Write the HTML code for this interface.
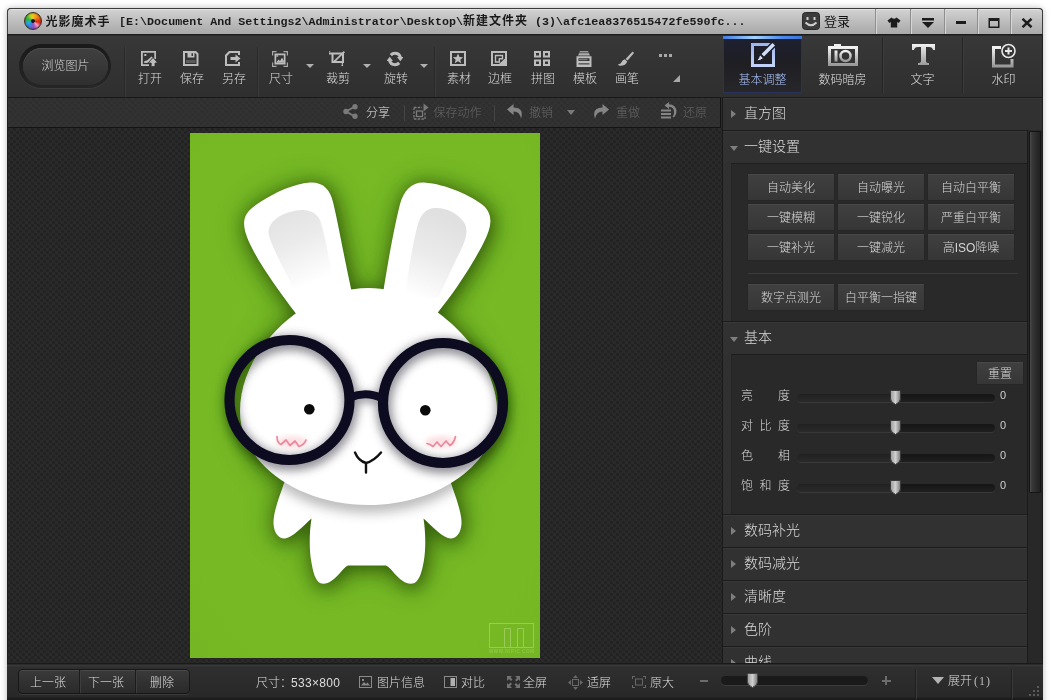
<!DOCTYPE html>
<html lang="zh-CN">
<head>
<meta charset="utf-8">
<title>光影魔术手</title>
<style>
*{box-sizing:border-box;margin:0;padding:0}
html,body{width:1050px;height:700px;overflow:hidden;background:#fff}
body{position:relative;font-family:"Liberation Sans","Noto Sans CJK SC",sans-serif;font-size:12px;font-weight:300;color:#c8c8c8}
.abs{position:absolute}
#shadow{position:absolute;left:7px;top:8px;width:1036px;height:700px;border-radius:5px 5px 0 0;box-shadow:0 0 6px rgba(0,0,0,.28)}
#win{will-change:transform;position:absolute;left:7px;top:8px;width:1036px;height:692px;background:#2d2d2d;border-radius:4px 4px 0 0;overflow:hidden}
#win>*{position:absolute}
/* coordinates inside #win are page coords minus (7,8) */
#title{left:0;top:0;width:1036px;height:26px;background:linear-gradient(#d3d3d3,#c1c1c1 40%,#a8a8a8);border:1px solid #3e3e3e;border-bottom:0;border-radius:4px 4px 0 0;box-shadow:inset 0 1px 0 #e2e2e2}
#title .t{position:absolute;color:#1a1a1a;font-weight:700;white-space:nowrap}
#toolbar{left:0;top:26px;width:1036px;height:63px;background:linear-gradient(#1c1c1c 0,#1c1c1c 1px,#383838 2px,#333 50%,#2f2f2f 100%)}
.pat{background-color:#2a2a2a;background-image:radial-gradient(circle at 1.5px 1.5px,#222 0,#222 1px,rgba(34,34,34,0) 2px),radial-gradient(circle at 4.5px 4.5px,#222 0,#222 1px,rgba(34,34,34,0) 2px);background-size:6px 6px}
#sub{left:0;top:89px;width:714px;height:31px}
#canvas{left:0;top:120px;width:715px;height:536px}
#panel{left:715px;top:89px;width:321px;height:567px;background:#2b2b2b}
#status{left:0;top:655px;width:1036px;height:37px;background:linear-gradient(#1a1a1a 0,#1a1a1a 1px,#3a3a3a 2px,#2f2f2f 4px,#282828 34px,#1c1c1c 35px)}

#title .sep{position:absolute;top:0;width:2px;height:25px;background:linear-gradient(90deg,#8e8e8e 50%,#d6d6d6 50%)}
#appicon{position:absolute;left:16px;top:3px;width:18px;height:18px;border-radius:50%;background:conic-gradient(from 0deg,#f7c51c 0,#f08a1a 45deg,#e3231b 100deg,#f3a0c0 135deg,#a04cc8 170deg,#3a7fe0 215deg,#2aa8e8 250deg,#2fb53a 290deg,#b4d82a 335deg,#f7c51c 360deg);border:1px solid #3a3018;box-shadow:inset 0 0 2px rgba(0,0,0,.6)}
#appicon:after{content:"";position:absolute;left:6px;top:6px;width:4px;height:4px;border-radius:50%;background:#151515}
.tb{position:absolute;top:0;height:63px;text-align:center;color:#dadada;white-space:nowrap}
.tb svg{position:absolute;left:50%;top:17px;margin-left:-8px;width:16px;height:16px}
.tb span{position:absolute;left:-19px;right:-21px;top:37px;line-height:16px;font-size:12px}
.vsep{position:absolute;top:13px;width:2px;height:50px;background:linear-gradient(90deg,#292929 50%,#3b3b3b 50%)}
.dd{position:absolute;top:30px;width:0;height:0;border:4px solid transparent;border-top:4px solid #b0b0b0;border-bottom:0}

#sub{background-color:#323232;background-image:radial-gradient(circle at 1.5px 1.5px,#2e2e2e 0,#2e2e2e 1px,rgba(46,46,46,0) 2px),radial-gradient(circle at 4.5px 4.5px,#2e2e2e 0,#2e2e2e 1px,rgba(46,46,46,0) 2px);background-size:6px 6px;border:1px solid #131313;border-left-color:#2a2a2a;border-top-color:#181818}
#sub .tx{position:absolute;top:7px;line-height:16px;font-size:12px;color:#666;white-space:nowrap}
#sub svg{position:absolute}
#sub .sp{position:absolute;top:7px;width:1px;height:16px;background:#454545}
#status .tx{position:absolute;top:11.5px;line-height:16px;font-size:12px;color:#dedede;white-space:nowrap}
#status svg{position:absolute}

#panel{background:#303030;border-left:1px solid #1a1a1a}
#panel>*{position:absolute}
.hd{left:0;width:304px;height:33px;background:#313131;border-top:1px solid #1c1c1c;box-shadow:inset 0 1px 0 #383838;font-size:14px;color:#dcdcdc;line-height:31px;padding-left:21px;white-space:nowrap}
.hd i{position:absolute;left:8px;top:12px;width:0;height:0;border:4px solid transparent;border-left:5px solid #7e7e7e;border-right:0}
.hd i.dn{left:7px;top:15px;border:4px solid transparent;border-top:5px solid #7e7e7e;border-bottom:0}
.ct{left:8px;width:296px;background:#292929;border-top:1px solid #1e1e1e;border-left:1px solid #242424}
.ct>*{position:absolute}
.bt{width:86px;height:26px;background:linear-gradient(#404040,#363636);box-shadow:inset 0 1px 0 #484848,0 0 0 1px #262626;text-align:center;line-height:29px;font-size:12px;color:#d6d6d6;white-space:nowrap}
.lb{left:9px;width:50px;font-size:12px;line-height:16px;color:#dadada;white-space:nowrap}
.tr{left:65px;width:198px;height:8px;border-radius:4px;background:linear-gradient(90deg,rgba(255,255,255,.05) 49%,rgba(255,255,255,0) 51%),linear-gradient(#151515,#1f1f1f);box-shadow:0 1px 0 #393939}
.th{left:158px;width:11px;height:15px}
.zv{left:268px;font-size:11px;line-height:12px;color:#cfcfcf}
.tab{position:absolute;top:2px;height:57px;text-align:center}
.tab span{position:absolute;left:0;right:0;top:36px;font-size:12px;line-height:16px;color:#e0e0e0}
.tab svg{position:absolute}
</style>
</head>
<body>
<div id="shadow"></div>
<div id="win">
 <div id="title">
  <div id="appicon"></div>
  <div class="t" style="left:37.5px;top:5px;font-size:12px;letter-spacing:1px;line-height:16px">光影魔术手</div>
  <div class="t" style="left:111px;top:5px;line-height:16px;font-family:'Liberation Mono','Noto Sans CJK SC',monospace;font-size:11.67px;letter-spacing:.025px"><span>[E:\Document And Settings2\Administrator\Desktop\</span><span style="letter-spacing:1px;font-size:12px">新建文件夹</span><span> (3)\afc1ea8376515472fe590fc...</span></div>
  <svg class="abs" style="left:794px;top:3px" width="18" height="18" viewBox="0 0 18 18"><rect x=".5" y=".5" width="17" height="17" rx="3" fill="#3c3c3c" stroke="#2a2a2a"/><rect x="4.5" y="5" width="2" height="3" fill="#cfcfcf"/><rect x="11.5" y="5" width="2" height="3" fill="#cfcfcf"/><path d="M3.5 10.5 Q9 16 14.500 10.500" fill="none" stroke="#cfcfcf" stroke-width="1.8"/></svg>
  <div class="t" style="left:816px;top:5px;font-size:13px;line-height:16px;font-weight:400;color:#111">登录</div>
  <div class="sep" style="left:867px"></div><div class="sep" style="left:902px"></div><div class="sep" style="left:936px"></div><div class="sep" style="left:969px"></div><div class="sep" style="left:1002px"></div>
  <svg class="abs" style="left:879px;top:8px" width="14" height="11" viewBox="0 0 14 11"><path d="M4.500 .5 L.5 3.500 L2.300 6 L3.800 5 L3.800 10.500 L10.200 10.500 L10.200 5 L11.700 6 L13.500 3.500 L9.500 .5 Q7 3 4.500 .5Z" fill="#1c1c1c"/></svg>
  <svg class="abs" style="left:914px;top:9px" width="12" height="10" viewBox="0 0 12 10"><rect x="0" y="0" width="12" height="2.500" fill="#1c1c1c"/><path d="M0 4 L12 4 L6 10Z" fill="#1c1c1c"/></svg>
  <div class="abs" style="left:948px;top:12px;width:10px;height:3px;background:#1c1c1c"></div>
  <svg class="abs" style="left:980px;top:9px" width="12" height="10" viewBox="0 0 12 10"><path d="M.5 0H11.500V10H.5Z M2 3V8.500H10V3Z" fill="#1c1c1c" fill-rule="evenodd"/></svg>
  <svg class="abs" style="left:1013px;top:9px" width="12" height="10" viewBox="0 0 12 10"><path d="M1.500 .8 L10.500 9.200 M10.500 .8 L1.500 9.200" stroke="#1c1c1c" stroke-width="2.500"/></svg>
 </div>
 <div id="toolbar">
<div class="abs" style="left:12px;top:10px;width:92px;height:44px;border-radius:22px;background:linear-gradient(#191919,#262626);box-shadow:0 1px 0 #3c3c3c"></div><div class="abs" style="left:16px;top:14px;width:85px;height:37px;border-radius:19px;background:linear-gradient(#404040,#2f2f2f);box-shadow:inset 0 1px 0 #4e4e4e;text-align:center;line-height:37px;color:#d4d4d4;font-size:12px">浏览图片</div>
<div class="vsep" style="left:117px"></div><div class="vsep" style="left:250px"></div><div class="vsep" style="left:427px"></div>
<div class="tb" style="left:134px;width:16px"><svg viewBox="0 0 16 16" fill="#bdbdbd"><path d="M0 0H15V8H13.300V1.800H1.800V13.200H8V15H0Z"/><rect x="3.300" y="3" width="2" height="2"/><path d="M2.800 11.800 L3.500 10 L6 9.500 L10.500 5.500 L11.800 6.500 L8 11 L6 12Z"/><path d="M12 6.500 L16.800 12 H14 V15.500 H10.200 V12 H7.200Z" stroke="#333" stroke-width=".8"/></svg><span>打开</span></div>
<div class="tb" style="left:176px;width:16px"><svg viewBox="0 0 16 16" fill="#bdbdbd"><path d="M0 0H13L15.500 2.500V15H0Z M2 2V13H13.500V3.500L12 2Z" fill-rule="evenodd"/><path d="M4.500 1H11.500V6.500H4.500Z M8.500 2.200V5H10V2.200Z" fill-rule="evenodd"/><rect x="3" y="9" width="9.500" height="3" opacity=".3"/></svg><span>保存</span></div>
<div class="tb" style="left:218px;width:16px"><svg viewBox="0 0 16 16" fill="#bdbdbd"><path d="M4 0H15V4H13V2H5L2 5V13H13V11H15V15H0V4Z"/><path d="M5.500 6H10.500V3.500L15.500 7.500L10.500 11.500V9H5.500Z"/></svg><span>另存</span></div>
<div class="tb" style="left:265px;width:16px"><svg viewBox="0 0 16 16" fill="#bdbdbd"><path d="M0 0H4.500V1.200H1.200V4.500H0Z M16 0V4.500H14.800V1.200H11.500V0Z M0 16V11.500H1.200V14.800H4.500V16Z M16 16H11.500V14.800H14.800V11.500H16Z" opacity=".85"/><path d="M2.500 2.500H13.500V13.500H2.500Z M4.200 4.200V11.800H11.800V4.200Z" fill-rule="evenodd"/><path d="M4.200 11.800 L6.500 8.500 L8 10 L10 6.800 L11.800 9.500V11.800Z"/><rect x="4.200" y="4.200" width="2" height="1.600" opacity=".8"/></svg><span>尺寸</span></div>
<div class="tb" style="left:322px;width:16px"><svg viewBox="0 0 16 16" fill="#bdbdbd"><path d="M2.500 1.500H15V3.500H4.500V10H13V3.500H15V12H2.500Z M0 1.500H2.500V3.500H0Z" fill-rule="evenodd"/><path d="M14.800 0 L16 1.200 L5 12 L3.800 10.800Z"/><rect x="0" y="0" width="1.300" height="1.300" opacity=".7"/><rect x="12.500" y="13.500" width="1.600" height="1.600"/><rect x="12.800" y="12" width="1.200" height="1.500"/></svg><span>裁剪</span></div>
<div class="tb" style="left:380px;width:16px"><svg viewBox="0 0 16 16" fill="#bdbdbd"><path d="M8 0.800 A7.200 7.200 0 0 1 14.900 6 L16.500 6 L13.300 10.300 L10 6 L11.700 6 A4.200 4.200 0 0 0 8 3.800 A4.300 4.300 0 0 0 4.900 5.200 L2.700 3.100 A7.200 7.200 0 0 1 8 0.800Z"/><path d="M8 15.200 A7.200 7.200 0 0 1 1.100 10 L-0.500 10 L2.700 5.700 L6 10 L4.300 10 A4.200 4.200 0 0 0 8 12.200 A4.300 4.300 0 0 0 11.100 10.800 L13.300 12.900 A7.200 7.200 0 0 1 8 15.200Z"/></svg><span>旋转</span></div>
<div class="tb" style="left:443px;width:16px"><svg viewBox="0 0 16 16" fill="#bdbdbd"><path d="M0 0H16V15H0Z M2 2V13H14V2Z" fill-rule="evenodd"/><path d="M8 2.600 L9.500 6 L13.200 6.300 L10.300 8.700 L11.300 12.300 L8 10.300 L4.700 12.300 L5.700 8.700 L2.800 6.300 L6.500 6Z"/></svg><span>素材</span></div>
<div class="tb" style="left:484px;width:16px"><svg viewBox="0 0 16 16" fill="#bdbdbd"><path d="M0 0H16V15H0Z M2 2V13H14V2Z" fill-rule="evenodd"/><path d="M3.800 3.800H12.200V8.500H9V11.700H3.800Z M5.200 5.200V10.300H7.600V7.100H10.800V5.200Z" fill-rule="evenodd"/><path d="M14 7.500V13H8Z"/></svg><span>边框</span></div>
<div class="tb" style="left:527px;width:16px"><svg viewBox="0 0 16 16" fill="#bdbdbd"><path d="M0 0H7V6.500H0Z M2 2V4.500H5V2Z M9 0H16V6.500H9Z M11 2V4.500H14V2Z M0 8.500H7V15H0Z M2 10.500V13H5V10.500Z M9 8.500H16V15H9Z M11 10.500V13H14V10.500Z" fill-rule="evenodd"/></svg><span>拼图</span></div>
<div class="tb" style="left:569px;width:16px"><svg viewBox="0 0 16 16" fill="#bdbdbd"><path d="M4 0H12L12.800 1.600H3.200Z" opacity=".75"/><path d="M3 2.300H13L14 4.600H2Z" opacity=".9"/><path d="M0.500 5.300H15.500V16H0.500Z M2.500 7.300V10H13.500V7.300Z" fill-rule="evenodd"/><rect x="3" y="8" width="8.500" height="1.200" opacity=".5"/><rect x="2.500" y="12.200" width="11" height="1.300" fill="#4a4a4a"/></svg><span>模板</span></div>
<div class="tb" style="left:611px;width:16px"><svg viewBox="0 0 16 16" fill="#bdbdbd"><path d="M14.600 0.500 L16 1.900 L9.600 9.600 L7.600 7.900Z"/><path d="M6.800 8.300 L9.200 10.600 Q8 15 1.500 14.800 Q0.300 14.600 0 13.500 Q3.200 12.800 3.800 10.800 Q4.500 8.800 6.800 8.300Z"/></svg><span>画笔</span></div>
<div class="dd" style="left:299px"></div><div class="dd" style="left:356px"></div><div class="dd" style="left:413px"></div><div class="tab" style="left:716px;width:79px;background:linear-gradient(#1d2033,#1e1e23 45%,#27272a);border:1px solid #28325e;border-top:0"><div class="abs" style="left:-1px;right:-1px;top:0;height:3px;background:linear-gradient(90deg,#3f7ce4,#a4d4ff 40%,#4a88ea 75%,#3a74dc)"></div>
<svg style="left:26px;top:6px" width="26" height="25" viewBox="0 0 26 25"><defs><linearGradient id="bl" x1="0" y1="0" x2="0" y2="1"><stop offset="0" stop-color="#9db6ee"/><stop offset="1" stop-color="#c2d2fa"/></linearGradient></defs><rect x="2.500" y="2.500" width="21" height="21" fill="none" stroke="url(#bl)" stroke-width="3"/><path d="M22.500 0 L26 3.500 L14 15.500 L10.500 12Z" fill="#cfdcfb" stroke="#1c1c24" stroke-width="1.400"/><path d="M9.800 12.500 L13.500 16.200 Q10 19.500 6.500 18.800 Q9 16.500 9.800 12.500Z" fill="#cfdcfb" stroke="#1c1c24" stroke-width="1"/></svg>
<span style="color:#aac2fa">基本调整</span></div>
<div class="abs" style="left:875px;top:3px;width:2px;height:56px;background:linear-gradient(90deg,#252525 50%,#3b3b3b 50%)"></div>
<div class="abs" style="left:955px;top:3px;width:2px;height:56px;background:linear-gradient(90deg,#252525 50%,#3b3b3b 50%)"></div>
<div class="tab" style="left:796px;width:79px"><svg style="left:25px;top:6px" width="30" height="24" viewBox="0 0 30 24"><defs><linearGradient id="ig" x1="0" y1="0" x2="0" y2="1"><stop offset="0" stop-color="#f2f2f2"/><stop offset="1" stop-color="#9a9a9a"/></linearGradient></defs><path d="M1.500 5.500H28.500V22.500H1.500Z" fill="none" stroke="url(#ig)" stroke-width="3"/><rect x="6" y="2" width="7" height="3" fill="#eee"/><rect x="6.500" y="8.500" width="3" height="11" fill="url(#ig)"/><circle cx="17.500" cy="14" r="5" fill="none" stroke="url(#ig)" stroke-width="2.500"/></svg><span>数码暗房</span></div>
<div class="tab" style="left:876px;width:79px"><svg style="left:29px;top:8px" width="23" height="22" viewBox="0 0 23 22"><path d="M0 0H23V6H21Q20.500 3 17 3H14V17Q14 19 17 19V21H6V19Q9 19 9 17V3H6Q2.500 3 2 6H0Z" fill="url(#ig)"/></svg><span>文字</span></div>
<div class="tab" style="left:957px;width:79px"><svg style="left:28px;top:7px" width="25" height="25" viewBox="0 0 25 25"><path d="M9 4.500H1.500V23H20V16" fill="none" stroke="url(#ig)" stroke-width="3"/><circle cx="16.500" cy="8" r="6.500" fill="none" stroke="#e8e8e8" stroke-width="1.600"/><path d="M16.500 4.500V11.500M13 8H20" stroke="#e8e8e8" stroke-width="2"/></svg><span>水印</span></div>
<div class="abs" style="left:652px;top:20px;width:3px;height:3px;background:#a8a8a8;box-shadow:5px 0 0 #a8a8a8,10px 0 0 #a8a8a8"></div><div class="abs" style="left:666px;top:41px;width:0;height:0;border-left:7px solid transparent;border-bottom:7px solid #a8a8a8"></div>
</div>
 <div id="sub" class="pat">
 <svg style="left:335px;top:6px" width="15" height="15" viewBox="0 0 15 15"><path d="M12 2.500 L3 7.500 L12 12.500" fill="none" stroke="#7a7a7a" stroke-width="2"/><circle cx="12" cy="2.700" r="2.700" fill="#7a7a7a"/><circle cx="3" cy="7.500" r="2.700" fill="#7a7a7a"/><circle cx="12" cy="12.300" r="2.700" fill="#7a7a7a"/></svg>
 <div class="tx" style="left:358px;color:#e2e2e2">分享</div>
 <div class="sp" style="left:396px"></div>
 <svg style="left:405px;top:5px" width="16" height="17" viewBox="0 0 16 17"><path d="M1 4.500H9 M1 4.500V16 M1 16H12 M12 16V9" fill="none" stroke="#7a7a7a" stroke-width="1.300" stroke-dasharray="2.500 1.200"/><rect x="3.500" y="8" width="6" height="5.500" fill="none" stroke="#7a7a7a" stroke-width="1.300"/><path d="M10.500 0.500 L15.500 4.500 L10.500 8.500Z" fill="#7a7a7a"/></svg>
 <div class="tx" style="left:425.5px">保存动作</div>
 <div class="sp" style="left:486px"></div>
 <svg style="left:499px;top:6px" width="16" height="15" viewBox="0 0 16 15"><path d="M6.500 0 L0 5.500 L6.500 11 V7.500 Q12.500 7.500 14 14.500 Q17.500 4 6.500 3.500Z" fill="#858585"/></svg>
 <div class="tx" style="left:521px">撤销</div>
 <div class="abs" style="left:559px;top:12px;width:0;height:0;border:4px solid transparent;border-top:5px solid #7a7a7a;border-bottom:0"></div>
 <svg style="left:585px;top:6px" width="16" height="15" viewBox="0 0 16 15"><path d="M9.500 0 L16 5.500 L9.500 11 V7.500 Q3.500 7.500 2 14.500 Q-1.500 4 9.500 3.500Z" fill="#858585"/></svg>
 <div class="tx" style="left:608px">重做</div>
 <svg style="left:653px;top:4px" width="17" height="17" viewBox="0 0 17 17"><path d="M8 0 L3.500 3.500 L8 7 V4.800 Q13.500 5 13 11 Q12.800 13 11.500 14.500 L13 15.500 Q16 12 15.500 8.500 Q14.500 2.500 8 2.200Z" fill="#858585"/><rect x="0" y="7.500" width="10" height="2" fill="#858585"/><rect x="0" y="11" width="10" height="2" fill="#858585"/><rect x="0" y="14.500" width="10" height="2" fill="#858585"/></svg>
 <div class="tx" style="left:675px">还原</div>
</div>
 <div id="canvas" class="pat">
<svg class="abs" style="left:183px;top:5px" width="350" height="525" viewBox="190 133 350 525">
<defs>
 <radialGradient id="bg" cx="50%" cy="45%" r="75%"><stop offset="0" stop-color="#77ba25"/><stop offset=".8" stop-color="#76b924"/><stop offset="1" stop-color="#74b623"/></radialGradient>
 <filter id="sh" x="-20%" y="-20%" width="140%" height="140%"><feGaussianBlur stdDeviation="8"/></filter>
 <filter id="sh2" x="-20%" y="-20%" width="140%" height="140%"><feGaussianBlur stdDeviation="4"/></filter>
 <filter id="sh3" x="-20%" y="-20%" width="140%" height="140%"><feGaussianBlur stdDeviation="2.500"/></filter>
 <filter id="sh5" x="-20%" y="-20%" width="140%" height="140%"><feGaussianBlur stdDeviation="5"/></filter>
 <filter id="sh6" x="-30%" y="-30%" width="160%" height="160%"><feGaussianBlur stdDeviation="16"/></filter>
 <filter id="sh4" x="-20%" y="-20%" width="140%" height="140%"><feGaussianBlur stdDeviation="6"/></filter>
 <linearGradient id="earL" x1="0" y1="0" x2=".35" y2="1"><stop offset="0" stop-color="#e0e0e0"/><stop offset=".45" stop-color="#ebebeb"/><stop offset=".95" stop-color="#fff"/></linearGradient>
 <linearGradient id="earR" x1=".3" y1="0" x2="0" y2="1"><stop offset="0" stop-color="#e0e0e0"/><stop offset=".45" stop-color="#ebebeb"/><stop offset=".95" stop-color="#fff"/></linearGradient>
 <clipPath id="imgclip"><rect x="190" y="133" width="350" height="525"/></clipPath>
 <path id="headp" d="M240.0 411 C240.0 349.5 304.2 288 368.5 288 C432.8 288 497.0 355.6 497.0 411 C497.0 462.9 439.5 505 368.5 505 C297.5 505 240.0 462.9 240.0 411Z"/>
 <path id="earLp" d="M303 323 L294 311 C280 292 262 268 252 248 C243 230 240 218 252 208 C266 197 290 184 310 182.500 C324 182 330 190 333 202 C338 222 345 262 352 293 Z"/>
 <path id="earRp" d="M383 293 C388 262 394 228 400 204 C404 190 412 182 424 182.500 C446 184 472 196 484 206 C494 216 491 228 484 242 C474 262 456 290 439 311 L430 323 Z"/>
 <path id="bodyp" d="M286 478 C280 495 273 512 273.500 524 C274 533 279 539 285 538.500 C292 538 302 527 311.500 518.500 C309.500 530 309 548 311 560 C313 572 315 580 320 583 C326 586 334 580 340 573 C343 569.500 345 567 348 565.500 L386 565.500 C389 567 391 569.500 394 573 C400 580 408 586 414.500 583 C419.500 580 422 572 424 560 C426 548 425.500 530 423.500 518.500 C433 527 443 538 450 538.500 C456 539 461 533 461.500 524 C462 512 455 495 449 478Z"/>
 <clipPath id="headclip"><use href="#headp"/></clipPath>
 <clipPath id="bodyclip"><use href="#bodyp"/></clipPath>
</defs>
<rect x="190" y="133" width="350" height="525" fill="url(#bg)"/>
<g clip-path="url(#imgclip)">
 <g filter="url(#sh6)" opacity=".34" fill="#123400" transform="translate(1,2)"><use href="#earLp"/><use href="#earRp"/><use href="#headp"/><use href="#bodyp"/></g>
 <g filter="url(#sh)" opacity=".5" fill="#123400" stroke="#123400" stroke-width="6" transform="translate(2,3)">
  <use href="#earLp"/><use href="#earRp"/><use href="#headp"/><use href="#bodyp"/>
 </g>
 <g filter="url(#sh5)" opacity=".5" fill="none" stroke="#143800" stroke-width="15" transform="translate(1,3)"><circle cx="289.500" cy="400" r="60"/><circle cx="443" cy="403" r="60"/></g>
 <use href="#bodyp" fill="#fff"/>
 <g clip-path="url(#bodyclip)"><use href="#headp" fill="#7a7a7a" opacity=".5" filter="url(#sh4)" transform="translate(0,8)"/></g>
 <use href="#earLp" fill="#fff"/><use href="#earRp" fill="#fff"/>
 <path d="M296 210.500 C308 208.500 316 212 320 220 C326 238 332 272 335 298 L298 298 C288 276 274 252 269 236 C266 224 278 214 296 210.500Z" fill="url(#earL)"/>
 <path d="M434 208 C446 207 460 214 465 224 C469 234 464 244 457 258 C450 272 444 286 438 298 L405 298 C408 272 413 242 418 224 C421 214 426 209 434 208Z" fill="url(#earR)"/>
 <use href="#headp" fill="#fff"/>
 <g clip-path="url(#headclip)">
  <g filter="url(#sh5)" opacity=".6" fill="none" stroke="#44444f" stroke-width="15" transform="translate(1,3)">
   <circle cx="289.500" cy="400" r="60"/><circle cx="443" cy="403" r="60"/><path d="M352 397 Q366 391 381 398" stroke-width="9"/>
  </g>
 </g>
 <g fill="none" stroke="#0d0b20" stroke-width="10.200">
  <circle cx="289.500" cy="400" r="60"/><circle cx="443" cy="403" r="60"/>
 </g>
 <path d="M350 397.500 Q366 390.500 383 398.500" fill="none" stroke="#0e0c22" stroke-width="8"/>
 <circle cx="309.300" cy="409.300" r="5.300" fill="#0a0a0a"/><circle cx="425.300" cy="410.200" r="5.300" fill="#0a0a0a"/>
 <ellipse cx="292" cy="442" rx="16" ry="6" fill="#fde0e4" filter="url(#sh3)"/>
 <ellipse cx="441" cy="442" rx="16" ry="6" fill="#fde0e4" filter="url(#sh3)"/>
 <path d="M277 436.500 Q277 443 281 444.500 L286 440 L290 445.500 L295 441 L299 446.500 Q304 445 306 440" fill="none" stroke="#e88a9a" stroke-width="1.700" stroke-linejoin="round" stroke-linecap="round"/>
 <path d="M427 443.500 Q430 444 433 446.500 L437 442 L441 446.500 L446 441 L450 445.500 Q454 443 455.500 436.500" fill="none" stroke="#e88a9a" stroke-width="1.700" stroke-linejoin="round" stroke-linecap="round"/>
 <path d="M355 452.500 Q358.500 461 366 463 Q374 461 381 452.500 M366 463 V472.500" fill="none" stroke="#111" stroke-width="2.400" stroke-linecap="round"/>
 <g fill="none" stroke="#b4d97a" stroke-width="1" opacity=".6"><rect x="489.500" y="623.500" width="44" height="24"/><path d="M504.500 647V628.500H510.500V647 M517.500 647V628.500H523.500V647"/></g>
 <text x="489" y="653" font-size="4.500" opacity=".6" fill="#b4d97a" font-family="Liberation Sans,sans-serif" textLength="45">WWW.NIPIC.COM</text>
</g>
</svg>
</div>
 <div id="panel">
<div class="hd" style="top:0px;width:320px"><i class=""></i>直方图</div>
<div class="hd" style="top:33px"><i class="dn"></i>一键设置</div>
<div class="ct" style="top:66px;height:158px">
<div class="bt" style="left:16px;top:10px">自动美化</div><div class="bt" style="left:106px;top:10px">自动曝光</div><div class="bt" style="left:196px;top:10px">自动白平衡</div><div class="bt" style="left:16px;top:40px">一键模糊</div><div class="bt" style="left:106px;top:40px">一键锐化</div><div class="bt" style="left:196px;top:40px">严重白平衡</div><div class="bt" style="left:16px;top:70px">一键补光</div><div class="bt" style="left:106px;top:70px">一键减光</div><div class="bt" style="left:196px;top:70px">高ISO降噪</div>
<div style="left:16px;top:109px;width:270px;height:1px;background:#3a3a3a"></div><div class="bt" style="left:16px;top:120px">数字点测光</div><div class="bt" style="left:106px;top:120px">白平衡一指键</div>
</div>
<div class="hd" style="top:224px"><i class="dn"></i>基本</div>
<div class="ct" style="top:257px;height:160px">
<div class="bt" style="left:245px;top:7px;width:46px;height:22px;line-height:25px">重置</div>
<div class="lb" style="top:33px;letter-spacing:6.5px">亮　度</div><div class="tr" style="top:39px"></div><svg class="th" style="top:35px" viewBox="0 0 11 15"><path d="M1.500 .5H9.500Q10.500 .5 10.500 1.500V9Q10.500 12 5.500 14.500Q.5 12 .5 9V1.500Q.5 .5 1.500 .5Z" fill="url(#tg)" stroke="#3a3a3a"/></svg><div class="zv" style="top:34px">0</div>
<div class="lb" style="top:63px;letter-spacing:6.5px">对比度</div><div class="tr" style="top:69px"></div><svg class="th" style="top:65px" viewBox="0 0 11 15"><path d="M1.500 .5H9.500Q10.500 .5 10.500 1.500V9Q10.500 12 5.500 14.500Q.5 12 .5 9V1.500Q.5 .5 1.500 .5Z" fill="url(#tg)" stroke="#3a3a3a"/></svg><div class="zv" style="top:64px">0</div>
<div class="lb" style="top:93px;letter-spacing:6.5px">色　相</div><div class="tr" style="top:99px"></div><svg class="th" style="top:95px" viewBox="0 0 11 15"><path d="M1.500 .5H9.500Q10.500 .5 10.500 1.500V9Q10.500 12 5.500 14.500Q.5 12 .5 9V1.500Q.5 .5 1.500 .5Z" fill="url(#tg)" stroke="#3a3a3a"/></svg><div class="zv" style="top:94px">0</div>
<div class="lb" style="top:123px;letter-spacing:6.5px">饱和度</div><div class="tr" style="top:129px"></div><svg class="th" style="top:125px" viewBox="0 0 11 15"><path d="M1.500 .5H9.500Q10.500 .5 10.500 1.500V9Q10.500 12 5.500 14.500Q.5 12 .5 9V1.500Q.5 .5 1.500 .5Z" fill="url(#tg)" stroke="#3a3a3a"/></svg><div class="zv" style="top:124px">0</div>
</div>
<div class="hd" style="top:417px"><i class=""></i>数码补光</div>
<div class="hd" style="top:450px"><i class=""></i>数码减光</div>
<div class="hd" style="top:483px"><i class=""></i>清晰度</div>
<div class="hd" style="top:516px"><i class=""></i>色阶</div>
<div class="hd" style="top:549px"><i class=""></i>曲线</div>
<div style="left:304px;top:33px;width:16px;height:534px;background:#282828;border-left:1px solid #1a1a1a"></div><div style="left:306px;top:34px;width:12px;height:362px;background:linear-gradient(90deg,#4c4c4c 0,#383838 2px,#2c2c2c 60%,#222 100%);border:1px solid #151515;border-radius:1px"></div>
</div>
 <div style="left:0;top:26px;width:1px;height:666px;background:#1e1e1e"></div><div style="left:1035px;top:26px;width:1px;height:666px;background:#1e1e1e"></div>
 <div id="status">
 <div class="abs" style="left:11px;top:6px;width:172px;height:25px;border-radius:4px;background:linear-gradient(#3a3a3a,#2a2a2a);border:1px solid #171717;box-shadow:inset 0 1px 0 #4a4a4a,0 1px 0 #3a3a3a"></div>
 <div class="abs" style="left:72px;top:7px;width:2px;height:23px;background:linear-gradient(90deg,#1c1c1c 50%,#3e3e3e 50%)"></div>
 <div class="abs" style="left:128px;top:7px;width:2px;height:23px;background:linear-gradient(90deg,#1c1c1c 50%,#3e3e3e 50%)"></div>
 <div class="tx" style="left:23px">上一张</div><div class="tx" style="left:81px">下一张</div><div class="tx" style="left:143px">删除</div>
 <div class="tx" style="left:249px">尺寸：<span style="margin-left:-1px;letter-spacing:.3px">533×800</span></div>
 <svg style="left:352px;top:13px" width="13" height="12" viewBox="0 0 13 12"><rect x=".5" y=".5" width="12" height="11" fill="none" stroke="#8a8a8a"/><path d="M2 9.500 L5 6 L7 8 L8.500 6.500 L11 9.500Z" fill="#8a8a8a"/><rect x="3" y="3" width="2" height="2" fill="#8a8a8a"/></svg>
 <div class="tx" style="left:370px">图片信息</div>
 <svg style="left:437px;top:13px" width="13" height="12" viewBox="0 0 13 12"><rect x=".5" y=".5" width="12" height="11" fill="none" stroke="#8a8a8a"/><rect x="6.500" y="2" width="4.500" height="8" fill="#b0b0b0"/></svg>
 <div class="tx" style="left:454px">对比</div>
 <svg style="left:500px;top:13px" width="13" height="12" viewBox="0 0 13 12" fill="#727272"><path d="M0 0H5L3.500 1.500L5.500 3.500L4 5L2 3L0 5Z M13 0V5L11.500 3.500L9.500 5.500L8 4L10 2L8 0Z M0 12V7L1.500 8.500L3.500 6.500L5 8L3 10L5 12Z M13 12H8L9.500 10.500L7.500 8.500L9 7L11 9L13 7Z"/></svg>
 <div class="tx" style="left:516px">全屏</div>
 <svg style="left:561px;top:12px" width="15" height="15" viewBox="0 0 15 15" fill="#686868"><rect x="4.500" y="4.500" width="6" height="6" fill="none" stroke="#686868"/><path d="M7.500 0L10 3H5Z M7.500 15L10 12H5Z M0 7.500L3 5V10Z M15 7.500L12 5V10Z"/></svg>
 <div class="tx" style="left:580px">适屏</div>
 <svg style="left:625px;top:13px" width="14" height="12" viewBox="0 0 14 12" fill="#686868"><rect x="3.500" y="3" width="7" height="6" fill="none" stroke="#686868"/><path d="M0 0H3V1H1V3H0Z M14 0V3H13V1H11V0Z M0 12V9H1V11H3V12Z M14 12H11V11H13V9H14Z"/></svg>
 <div class="tx" style="left:643px">原大</div>
 <div class="abs" style="left:693px;top:17px;width:8px;height:2px;background:#6c6c6c"></div>
 <div class="abs" style="left:714px;top:13px;width:147px;height:9px;border-radius:5px;background:#1a1a1a;box-shadow:0 1px 0 #3c3c3c"></div>
 <svg style="left:740px;top:10px" width="11" height="15" viewBox="0 0 11 15"><defs><linearGradient id="tg" x1="0" x2="1"><stop offset="0" stop-color="#9a9a9a"/><stop offset=".5" stop-color="#d0d0d0"/><stop offset="1" stop-color="#7a7a7a"/></linearGradient></defs><path d="M1.500 .5H9.500Q10.500 .5 10.500 1.500V9Q10.500 12 5.500 14.500Q.5 12 .5 9V1.500Q.5 .5 1.500 .5Z" fill="url(#tg)" stroke="#4a4a4a"/></svg>
 <div class="abs" style="left:875px;top:17px;width:9px;height:2px;background:#6c6c6c"></div><div class="abs" style="left:878px;top:13px;width:2px;height:9px;background:#6c6c6c"></div>
 <div class="abs" style="left:908px;top:6px;width:2px;height:30px;background:linear-gradient(90deg,#1f1f1f 50%,#3a3a3a 50%)"></div>
 <div class="abs" style="left:925px;top:14px;width:0;height:0;border:6.500px solid transparent;border-top:7px solid #b4b4b4;border-bottom:0"></div>
 <div class="tx" style="left:941px;top:9.5px">展开<span style="font-family:'Liberation Serif',serif;font-size:12px;margin-left:2px;letter-spacing:1px;color:#bbb">(1)</span></div>
 <div class="abs" style="left:1004px;top:6px;width:2px;height:30px;background:linear-gradient(90deg,#1f1f1f 50%,#3a3a3a 50%)"></div>
 <svg style="left:1021px;top:22px" width="12" height="12" viewBox="0 0 12 12" fill="#5a5a5a"><rect x="9" y="1" width="2" height="2"/><rect x="5" y="5" width="2" height="2"/><rect x="9" y="5" width="2" height="2"/><rect x="1" y="9" width="2" height="2"/><rect x="5" y="9" width="2" height="2"/><rect x="9" y="9" width="2" height="2"/></svg>
</div>
</div>
</body>
</html>
